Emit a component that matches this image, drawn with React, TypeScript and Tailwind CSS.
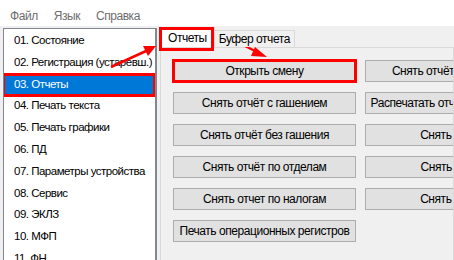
import React from "react";

const items = [
  "01. Состояние",
  "02. Регистрация (устаревш.)",
  "03. Отчеты",
  "04. Печать текста",
  "05. Печать графики",
  "06. ПД",
  "07. Параметры устройства",
  "08. Сервис",
  "09. ЭКЛЗ",
  "10. МФП",
  "11. ФН",
];

const rows: [string, string | null][] = [
  ["Открыть смену", "Снять отчёт по кассирам"],
  ["Снять отчёт с гашением", "Распечатать отчёт о регистрации"],
  ["Снять отчёт без гашения", "Снять отчёт X"],
  ["Снять отчёт по отделам", "Снять отчёт Z"],
  ["Снять отчет по налогам", "Снять отчёт Y"],
  ["Печать операционных регистров", null],
];

function Btn({ text, mark }: { text: string; mark?: boolean }) {
  return (
    <div className="relative">
      <div className="h-[22px] w-[183px] bg-[#e1e1e1] border border-[#adadad] flex items-center justify-center whitespace-nowrap text-black">
        {text}
      </div>
      {mark && (
        <div className="absolute -left-[1px] -top-[1px] w-[185px] h-[24px] border-[3px] border-[#ff0000] pointer-events-none" />
      )}
    </div>
  );
}

export default function App() {
  return (
    <div className="relative w-[454px] h-[260px] overflow-hidden bg-[#f0f0f0] text-[12px] tracking-[-0.45px] font-['Liberation_Sans',Arial,sans-serif]">
      {/* menu bar */}
      <div className="h-[26px] bg-white flex items-end pb-[3px] pl-[10px] gap-[16px] text-[#6d6d6d] leading-[14px]">
        <span>Файл</span>
        <span>Язык</span>
        <span>Справка</span>
      </div>
      <div className="flex pt-[2px]">
        {/* list box */}
        <div className="ml-[3px] w-[154px] h-[240px] bg-white border border-[#828790] border-r-[2px] pt-[1px] overflow-hidden shrink-0 text-[11.5px] tracking-[-0.5px]">
          {items.map((t, i) => (
            <div
              key={t}
              className={
                "relative h-[21.8px] leading-[21.8px] pl-[10px] whitespace-nowrap " +
                (i === 2 ? "bg-[#0078d7] text-white" : "text-black")
              }
            >
              {t}
              {i === 2 && (
                <div className="absolute -left-[2px] -top-[1px] w-[154px] h-[24px] border-[3px] border-[#ff0000]" />
              )}
            </div>
          ))}
        </div>
        {/* tab control */}
        <div className="ml-[3px] flex-1 flex flex-col min-w-0">
          <div className="flex items-end h-[19px] pl-[1px] relative z-10">
            <div className="relative h-[20px] pl-[6px] pr-[7px] bg-white border border-b-0 border-[#d9d9d9] flex items-center text-black">
              Отчеты
              <div className="absolute -left-[3px] -top-[1px] w-[55px] h-[24px] border-[3px] border-[#ff0000]" />
            </div>
            <div className="h-[17px] pl-[4px] pr-[4px] bg-[#f0f0f0] border border-b-0 border-l-0 border-[#d9d9d9] flex items-center text-black">
              Буфер отчета
            </div>
          </div>
          <div className="flex-1 h-[213px] border border-[#d9d9d9] bg-[#f0f0f0] pt-[12px] pl-[12px] overflow-hidden">
            <div className="grid grid-cols-[183px_183px] gap-x-[9px] gap-y-[10px] w-[375px]">
              {rows.map(([a, b], i) => (
                <React.Fragment key={a}>
                  <Btn text={a} mark={i === 0} />
                  {b ? <Btn text={b} /> : <div />}
                </React.Fragment>
              ))}
            </div>
          </div>
        </div>
      </div>
      {/* arrows overlay */}
      <svg className="absolute left-0 top-0 pointer-events-none" width="454" height="260">
        <line x1="111" y1="67" x2="146" y2="51" stroke="#ff0000" strokeWidth="2.5" />
        <polygon points="156,46 143,46 148,56" fill="#ff0000" />
        <line x1="223" y1="35" x2="257" y2="52" stroke="#ff0000" strokeWidth="2.5" />
        <polygon points="267,57 255,47 251,56" fill="#ff0000" />
      </svg>
    </div>
  );
}
